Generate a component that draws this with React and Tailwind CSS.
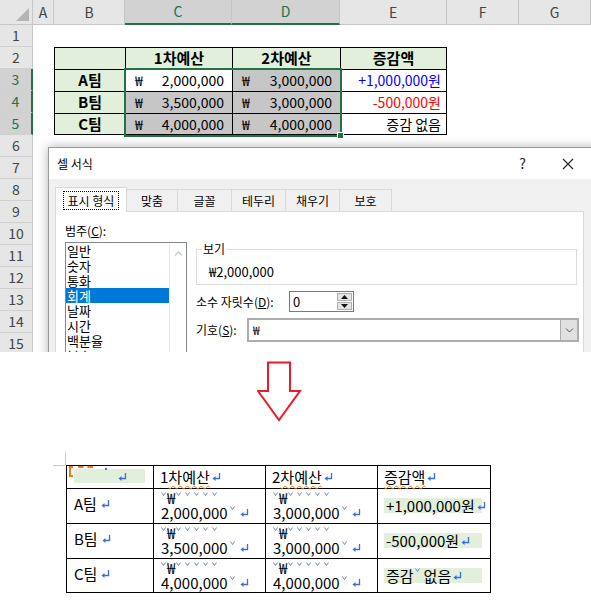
import { Fragment } from 'react'

const FONT = "font-['Noto_Sans_CJK_KR','Noto_Sans',sans-serif]"
const LETTERS = ['A', 'B', 'C', 'D', 'E', 'F', 'G']
const TABS = [
    { label: '맞춤', w: 'w-[51px]' },
    { label: '글꼴', w: 'w-[54px]' },
    { label: '테두리', w: 'w-[54px]' },
    { label: '채우기', w: 'w-[54px]' },
    { label: '보호', w: 'w-[52px]' },
]
const CATEGORIES = ['일반', '숫자', '통화', '회계', '날짜', '시간', '백분율', '분수']

// 엑셀 표 데이터 (B2:E5)
const SHEET = {
    2: { B: '', C: '1차예산', D: '2차예산', E: '증감액' },
    3: { B: 'A팀', C: '2,000,000', D: '3,000,000', E: '+1,000,000원' },
    4: { B: 'B팀', C: '3,500,000', D: '3,000,000', E: '-500,000원' },
    5: { B: 'C팀', C: '4,000,000', D: '4,000,000', E: '증감 없음' },
}

const WORD_ROWS = [
    { team: 'A팀', a: '2,000,000', b: '3,000,000', diff: '+1,000,000원' },
    { team: 'B팀', a: '3,500,000', b: '3,000,000', diff: '-500,000원' },
    { team: 'C팀', a: '4,000,000', b: '4,000,000', diff: 'none' },
]

export default function App() {
    return (
        <div className={`w-[591px] h-[609px] bg-white overflow-hidden flex flex-col ${FONT}`}>
            <ExcelView />

            {/* 화살표 */}
            <div className="h-[100px] shrink-0 pt-[9px] pl-[257px]">
                <svg className="block" width="45" height="61" viewBox="0 0 45 61">
                    <polygon points="11,1.5 33,1.5 33,30 43,30 22,59 1,30 11,30" fill="white" stroke="#ed1c24" strokeWidth="2" />
                </svg>
            </div>

            <WordTable />
        </div>
    )
}

function ExcelView() {
    return (
        <div className="relative h-[352px] shrink-0 overflow-hidden text-[14px] text-black">
            <div className="grid grid-cols-[33px_21px_71px_107px_108px_107px_72px_72px]">
                {/* 열 머리글 */}
                <div className="h-[25px] bg-[#e6e6e6] border-r border-b border-[#c6c6c6]">
                    <svg className="block" width="32" height="24"><polygon points="29,8 29,21 16,21" fill="#b4b4b4" /></svg>
                </div>
                {LETTERS.map(l => {
                    const sel = l === 'C' || l === 'D'
                    return (
                        <div
                            key={l}
                            className={`h-[25px] flex items-center justify-center border-r border-[#c6c6c6] ${sel ? 'bg-[#d2d2d2] text-[#217346] border-b-2 border-b-[#217346]' : 'bg-[#e6e6e6] text-[#444] border-b'}`}
                        >
                            {l}
                        </div>
                    )
                })}

                {Array.from({ length: 15 }, (_, i) => i + 1).map(r => {
                    const sel = r >= 3 && r <= 5
                    return (
                        <Fragment key={r}>
                            <div
                                className={`h-[22px] flex items-center justify-center border-b border-[#d0d0d0] ${sel ? 'bg-[#d2d2d2] text-[#217346] border-r-2 border-r-[#217346]' : 'bg-[#e6e6e6] text-[#444] border-r border-r-[#c6c6c6]'}`}
                            >
                                {r}
                            </div>
                            {LETTERS.map(l => (
                                <SheetCell key={l} r={r} c={l} />
                            ))}
                        </Fragment>
                    )
                })}
            </div>

            {/* 선택 영역 테두리 */}
            <div className="absolute left-[124px] top-[68px] w-[218px] h-[69px] border-2 border-[#217346]" />
            <div className="absolute left-[337px] top-[132px] w-[7px] h-[7px] bg-[#217346] border border-white" />

            <FormatDialog />
        </div>
    )
}

function SheetCell({ r, c }) {
    const row = SHEET[r]
    if (!row || c === 'A' || c === 'F' || c === 'G') return <div className="h-[22px]" />

    const val = row[c]
    let cls = 'h-[22px] border-l border-t border-black flex items-center'
    if (c === 'E') cls += ' border-r'
    if (r === 5) cls += ' border-b'

    if (r === 2 || c === 'B') {
        return <div className={`${cls} justify-center bg-[#e2efda] font-bold text-[15px]`}>{val}</div>
    }
    if (c === 'C' || c === 'D') {
        const gray = !(r === 3 && c === 'C')
        return (
            <div className={`${cls} justify-between pl-[9px] pr-[8px] ${gray ? 'bg-[#c6c6c6]' : 'bg-white'}`}>
                <span>₩</span>
                <span>{val}</span>
            </div>
        )
    }
    const color = r === 3 ? 'text-[#0000ff]' : r === 4 ? 'text-[#ff0000]' : 'text-black'
    return <div className={`${cls} justify-end pr-[5px] ${color}`}>{val}</div>
}

function FormatDialog() {
    return (
        <div className="absolute left-[48px] top-[147px] w-[560px] h-[260px] bg-[#f0f0f0] border border-[#9a9a9a] shadow-[0_0_10px_rgba(0,0,0,0.3)] text-[12px] text-black">
            <div className="h-[31px] bg-white flex items-center pl-[8px]">
                <span>셀 서식</span>
                <span className="ml-auto text-[14px] text-[#222]">?</span>
                <svg className="ml-[36px] mr-[33px]" width="12" height="12" viewBox="0 0 12 12">
                    <path d="M1 1L11 11M11 1L1 11" stroke="#222" strokeWidth="1.1" />
                </svg>
            </div>

            <div className="pl-[6px] pt-[8px]">
                {/* 탭 */}
                <div className="flex items-end h-[24px]">
                    <div className="relative z-10 -mb-px h-[25px] w-[72px] bg-white border border-b-0 border-[#d9d9d9] flex items-center justify-center">
                        <span className="outline outline-1 outline-dotted outline-black px-[4px] leading-[17px]">표시 형식</span>
                    </div>
                    {TABS.map(t => (
                        <div key={t.label} className={`h-[22px] ${t.w} border-t border-r border-[#d9d9d9] flex items-center justify-center`}>
                            {t.label}
                        </div>
                    ))}
                </div>

                {/* 패널 */}
                <div className="w-[529px] h-[200px] bg-white border border-[#d9d9d9] flex">
                    <div className="pl-[9px] pt-[11px]">
                        <div className="leading-[16px]">범주(<span className="underline">C</span>):</div>
                        <div className="mt-[3px] w-[122px] h-[120px] border border-[#828790] flex">
                            <div className="flex-1 text-[13px] leading-[15px]">
                                {CATEGORIES.map(c => (
                                    <div key={c} className={`pl-[1px] ${c === '회계' ? 'bg-[#0078d7] text-white' : ''}`}>{c}</div>
                                ))}
                            </div>
                            <div className="w-[17px] border-l border-[#e8e8e8] flex justify-center pt-[8px]">
                                <svg width="9" height="5" viewBox="0 0 9 5"><path d="M1 4.5L4.5 1L8 4.5" fill="none" stroke="#c8c8c8" strokeWidth="1.3" /></svg>
                            </div>
                        </div>
                    </div>

                    <div className="ml-[9px] pt-[37px]">
                        <div className="relative w-[381px] h-[36px] border border-[#dcdcdc] pl-[12px] pt-[13px] text-[13px] leading-[18px]">
                            <span className="absolute -top-[9px] left-[5px] bg-white px-[1px] text-[12px] leading-[16px]">보기</span>
                            ₩2,000,000
                        </div>

                        <div className="mt-[6px] flex items-center h-[21px]">
                            <span className="w-[93px]">소수 자릿수(<span className="underline">D</span>):</span>
                            <div className="w-[65px] h-[21px] border border-[#7a7a7a] flex items-center justify-between pl-[3px] pr-px">
                                <span className="text-[13px]">0</span>
                                <div className="flex flex-col gap-px">
                                    <div className="w-[15px] h-[8px] bg-[#e5e5e5] border border-[#adadad] flex items-center justify-center">
                                        <svg width="7" height="4"><polygon points="0,4 7,4 3.5,0" fill="#111" /></svg>
                                    </div>
                                    <div className="w-[15px] h-[8px] bg-[#e5e5e5] border border-[#adadad] flex items-center justify-center">
                                        <svg width="7" height="4"><polygon points="0,0 7,0 3.5,4" fill="#111" /></svg>
                                    </div>
                                </div>
                            </div>
                        </div>

                        <div className="mt-[6px] flex items-center h-[24px]">
                            <span className="w-[51px]">기호(<span className="underline">S</span>):</span>
                            <div className="w-[332px] h-[24px] border-2 border-[#adadad] flex items-center">
                                <span className="pl-[4px] flex-1">₩</span>
                                <div className="w-[17px] h-full bg-[#e1e1e1] border-l border-[#adadad] flex items-center justify-center">
                                    <svg width="9" height="5" viewBox="0 0 9 5"><path d="M1 0.5L4.5 4L8 0.5" fill="none" stroke="#555" strokeWidth="1" /></svg>
                                </div>
                            </div>
                        </div>
                    </div>
                </div>
            </div>
        </div>
    )
}

function Ret() {
    return (
        <svg className="block shrink-0" width="9" height="9" viewBox="0 0 9 9">
            <path d="M7.5 1V6.5H2.5" fill="none" stroke="#3a6fd8" strokeWidth="1.3" />
            <polygon points="0.5,6.5 3.5,4 3.5,9" fill="#3a6fd8" />
        </svg>
    )
}

function Sp() {
    return (
        <svg className="block shrink-0" width="5" height="4" viewBox="0 0 5 4">
            <polyline points="0.5,0.5 2.5,3.5 4.5,0.5" fill="none" stroke="#5b7bc8" strokeWidth="0.9" />
        </svg>
    )
}

const TD = 'border border-black p-0 align-top'
const WAVY = 'underline decoration-wavy decoration-[#f07a1a] decoration-1 underline-offset-2'

function WordTable() {
    return (
        <div className="h-[157px] shrink-0 flex items-start pl-[53px] text-[15px] leading-[17px] text-black">
            <svg className="block shrink-0" width="13" height="14" viewBox="0 0 13 14">
                <path d="M12.5 0V13.5M0 13.5H12" stroke="#c8c8c8" strokeWidth="1" />
            </svg>
            <table className="mt-[13px] table-fixed border-collapse w-[424px] whitespace-nowrap">
                <colgroup>
                    <col className="w-[87px]" />
                    <col className="w-[112px]" />
                    <col className="w-[112px]" />
                    <col className="w-[113px]" />
                </colgroup>
                <tbody>
                    <tr className="h-[23px]">
                        <td className={`relative ${TD}`}>
                            <div className="absolute left-[2px] top-0 w-[4px] h-[11px] border-l-2 border-t-2 border-b-2 border-[#f07a1a]" />
                            <div className="absolute left-[11px] top-0 w-[15px] h-[2px] border-t-2 border-dashed border-[#f07a1a]" />
                            <div className="absolute left-[38px] top-[2px] w-[2px] h-[2px] bg-[#3a6fd8]" />
                            <div className="ml-[7px] mt-[3px] w-[71px] h-[14px] bg-[#e2efda] flex items-center justify-end pr-[18px]">
                                <Ret />
                            </div>
                        </td>
                        <td className={TD}>
                            <div className="flex items-center pl-[6px] pt-[2px]">
                                1<span className={WAVY}>차예산</span>
                                <span className="ml-[2px]"><Ret /></span>
                            </div>
                        </td>
                        <td className={TD}>
                            <div className="flex items-center pl-[6px] pt-[2px]">
                                2<span className={WAVY}>차예산</span>
                                <span className="ml-[2px]"><Ret /></span>
                            </div>
                        </td>
                        <td className={TD}>
                            <div className="flex items-center pl-[6px] pt-[2px]">
                                <span className={WAVY}>증감액</span>
                                <span className="ml-[2px]"><Ret /></span>
                            </div>
                        </td>
                    </tr>
                    {WORD_ROWS.map((row, i) => (
                        <tr key={row.team} className={i === 2 ? 'h-[34px]' : 'h-[35px]'}>
                            <td className={TD}>
                                <div className="flex items-center gap-[4px] pl-[7px] pt-[6px]">{row.team}<Ret /></div>
                            </td>
                            <MoneyCell value={row.a} />
                            <MoneyCell value={row.b} />
                            <td className={TD}>
                                <div className="ml-[6px] mt-[9px] w-[98px] h-[15px] bg-[#e2efda] flex items-center pl-[2px] leading-[15px]">
                                    {row.diff === 'none' ? (
                                        <>
                                            증감
                                            <span className="ml-[1px] self-start"><Sp /></span>
                                            <span className="ml-[4px]">없음</span>
                                        </>
                                    ) : (
                                        row.diff
                                    )}
                                    <span className="ml-[2px]"><Ret /></span>
                                </div>
                            </td>
                        </tr>
                    ))}
                </tbody>
            </table>
        </div>
    )
}

function MoneyCell({ value }) {
    return (
        <td className={TD}>
            <div className="pl-[7px] pt-[2px]">
                <div className="flex items-start h-[13px] leading-[13px]">
                    <span className="mt-[1px]"><Sp /></span>
                    <span className="ml-[1px]">₩</span>
                    <span className="ml-[1px] flex gap-[4px] mt-[1px]"><Sp /><Sp /><Sp /><Sp /><Sp /></span>
                </div>
                <div className="flex items-center h-[17px]">
                    {value}
                    <span className="ml-[2px] self-start mt-[2px]"><Sp /></span>
                    <span className="ml-[5px]"><Ret /></span>
                </div>
            </div>
        </td>
    )
}
